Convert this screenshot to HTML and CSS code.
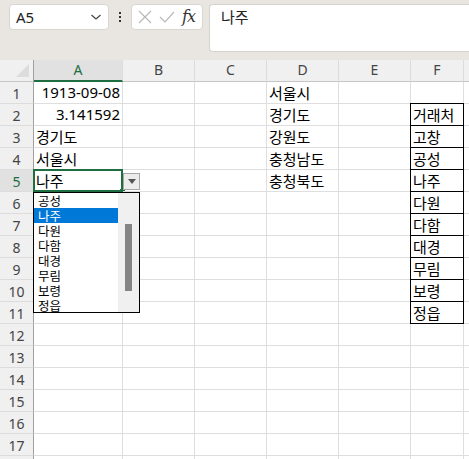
FILE: index.html
```html
<!DOCTYPE html>
<html lang="ko">
<head>
<meta charset="utf-8">
<link rel="stylesheet" href="styles.css">
</head>
<body>
<div class="topbar">
  <div class="namebox"><span>A5</span>
    <svg class="chev" width="12" height="8" viewBox="0 0 12 8"><path d="M1.5 2 L6 6 L10.5 2" fill="none" stroke="#444" stroke-width="1.2"/></svg>
  </div>
  <div class="dots"><i></i><i></i><i></i></div>
  <div class="fbtns">
    <svg width="14" height="14" viewBox="0 0 14 14"><path d="M1 1 L13 13 M13 1 L1 13" stroke="#b8b8b8" stroke-width="1.2" fill="none"/></svg>
    <svg width="16" height="12" viewBox="0 0 16 12"><path d="M1 6 L6 11 L15 1" stroke="#b8b8b8" stroke-width="1.2" fill="none"/></svg>
    <span class="fx">fx</span>
  </div>
  <div class="formula">나주</div>
</div>
<div class="sheet">
  <div class="corner"><span class="tri"></span></div>
  <div class="ch sel">A</div><div class="ch">B</div><div class="ch">C</div><div class="ch">D</div><div class="ch">E</div><div class="ch">F</div><div class="ch last"></div>

  <div class="rh">1</div><div class="c r">1913-09-08</div><div class="c"></div><div class="c"></div><div class="c">서울시</div><div class="c"></div><div class="c"></div><div class="c last"></div>
  <div class="rh">2</div><div class="c r">3.141592</div><div class="c"></div><div class="c"></div><div class="c">경기도</div><div class="c"></div><div class="c bx">거래처</div><div class="c last"></div>
  <div class="rh">3</div><div class="c">경기도</div><div class="c"></div><div class="c"></div><div class="c">강원도</div><div class="c"></div><div class="c bx">고창</div><div class="c last"></div>
  <div class="rh">4</div><div class="c">서울시</div><div class="c"></div><div class="c"></div><div class="c">충청남도</div><div class="c"></div><div class="c bx">공성</div><div class="c last"></div>
  <div class="rh sel">5</div><div class="c active">나주
    <span class="ddbtn"><svg width="8" height="5" viewBox="0 0 8 5"><path d="M0 0 H8 L4 5 Z" fill="#555"/></svg></span>
    <div class="ddlist">
      <ul>
        <li>공성</li><li class="on">나주</li><li>다원</li><li>다함</li><li>대경</li><li>무림</li><li>보령</li><li>정읍</li>
      </ul>
      <div class="sb"><div class="thumb"></div></div>
    </div>
  </div><div class="c"></div><div class="c"></div><div class="c">충청북도</div><div class="c"></div><div class="c bx">나주</div><div class="c last"></div>
  <div class="rh">6</div><div class="c"></div><div class="c"></div><div class="c"></div><div class="c"></div><div class="c"></div><div class="c bx">다원</div><div class="c last"></div>
  <div class="rh">7</div><div class="c"></div><div class="c"></div><div class="c"></div><div class="c"></div><div class="c"></div><div class="c bx">다함</div><div class="c last"></div>
  <div class="rh">8</div><div class="c"></div><div class="c"></div><div class="c"></div><div class="c"></div><div class="c"></div><div class="c bx">대경</div><div class="c last"></div>
  <div class="rh">9</div><div class="c"></div><div class="c"></div><div class="c"></div><div class="c"></div><div class="c"></div><div class="c bx">무림</div><div class="c last"></div>
  <div class="rh">10</div><div class="c"></div><div class="c"></div><div class="c"></div><div class="c"></div><div class="c"></div><div class="c bx">보령</div><div class="c last"></div>
  <div class="rh">11</div><div class="c"></div><div class="c"></div><div class="c"></div><div class="c"></div><div class="c"></div><div class="c bx">정읍</div><div class="c last"></div>
  <div class="rh">12</div><div class="c"></div><div class="c"></div><div class="c"></div><div class="c"></div><div class="c"></div><div class="c"></div><div class="c last"></div>
  <div class="rh">13</div><div class="c"></div><div class="c"></div><div class="c"></div><div class="c"></div><div class="c"></div><div class="c"></div><div class="c last"></div>
  <div class="rh">14</div><div class="c"></div><div class="c"></div><div class="c"></div><div class="c"></div><div class="c"></div><div class="c"></div><div class="c last"></div>
  <div class="rh">15</div><div class="c"></div><div class="c"></div><div class="c"></div><div class="c"></div><div class="c"></div><div class="c"></div><div class="c last"></div>
  <div class="rh">16</div><div class="c"></div><div class="c"></div><div class="c"></div><div class="c"></div><div class="c"></div><div class="c"></div><div class="c last"></div>
  <div class="rh">17</div><div class="c"></div><div class="c"></div><div class="c"></div><div class="c"></div><div class="c"></div><div class="c"></div><div class="c last"></div>
  <div class="rh"></div><div class="c"></div><div class="c"></div><div class="c"></div><div class="c"></div><div class="c"></div><div class="c"></div><div class="c last"></div>
</div>
</body>
</html>
```

FILE: styles.css
```css
* { box-sizing: border-box; }
html, body { margin: 0; padding: 0; }
body {
  width: 469px; height: 459px; overflow: hidden;
  background: #fff;
  font-family: "Noto Sans CJK KR", "Noto Sans", sans-serif;
  color: #000;
}
.topbar {
  height: 60px;
  background: #e9e6e2;
  display: flex;
  align-items: flex-start;
  padding: 4px 0 0 9px;
}
.namebox {
  width: 100px; height: 26px;
  background: #fff;
  border: 1px solid #d9d6d2;
  border-radius: 4px;
  display: flex; align-items: center; justify-content: space-between;
  padding: 0 6px 0 6px;
  font-family: "Noto Sans", sans-serif;
  font-size: 15px; color: #222;
}
.dots {
  width: 22px; height: 26px;
  display: flex; flex-direction: column; align-items: center; justify-content: center; gap: 2px;
}
.dots i { display: block; width: 2px; height: 2px; background: #333; }
.fbtns {
  width: 72px; height: 26px;
  background: #fff;
  border: 1px solid #d9d6d2;
  border-radius: 4px;
  display: flex; align-items: center; gap: 7px;
  padding: 0 0 0 6px;
}
.fx {
  font-family: "DejaVu Serif", "Liberation Serif", serif;
  font-style: italic;
  font-size: 16px; color: #333;
  line-height: 1;
  letter-spacing: -1px;
}
.formula {
  margin-left: 6px;
  flex: 1;
  height: 48px;
  background: #fff;
  border: 1px solid #d6d3cf;
  border-right: none;
  border-radius: 4px 0 0 4px;
  padding: 2px 0 0 11px;
  font-size: 15px; line-height: 20px; color: #222;
}
.sheet {
  display: grid;
  grid-template-columns: 34px 89px 72px 72px 72px 72px 53px 1fr;
  grid-template-rows: 22px;
  grid-auto-rows: 22px;
}
.corner {
  background: #f0f0f0;
  border-right: 1px solid #a0a0a0;
  border-bottom: 1px solid #c6c6c6;
  position: relative;
}
.tri {
  position: absolute; right: 4px; bottom: 4px;
  width: 0; height: 0;
  border-left: 13px solid transparent;
  border-bottom: 13px solid #dcdcdc;
}
.ch {
  background: #f0f0f0;
  border-right: 1px solid #dcdcdc;
  border-bottom: 1px solid #c6c6c6;
  font-family: "Noto Sans", sans-serif;
  font-size: 14px; color: #444;
  text-align: center; line-height: 20px;
}
.ch.sel {
  background: #e1e1e1;
  border-bottom: 2px solid #1e6e42;
  color: #1e6e42;
}
.ch.last { border-right: none; }
.rh {
  background: #f0f0f0;
  border-right: 1px solid #a0a0a0;
  border-bottom: 1px solid #dcdcdc;
  font-family: "Noto Sans", sans-serif;
  font-size: 14px; color: #444;
  text-align: center; line-height: 24px;
}
.rh.sel { background: #e1e1e1; color: #1e6e42; }
.c {
  border-right: 1px solid #dedede;
  border-bottom: 1px solid #dedede;
  font-size: 15px; line-height: 21px;
  padding: 0 3px 0 2px;
  white-space: nowrap;
  position: relative;
}
.c.r { text-align: right; font-family: "Noto Sans", sans-serif; padding-right: 2px; }
.c.last { border-right: none; }
.c.bx::before {
  content: "";
  position: absolute;
  left: -1px; top: -1px; right: -1px; bottom: -1px;
  border: 1px solid #000;
  pointer-events: none;
}
.c.active::before {
  content: "";
  position: absolute;
  left: -1px; top: -1px; right: -1px; bottom: -1px;
  border: 2px solid #1e6e42;
}
.c.active::after {
  content: "";
  position: absolute;
  right: -3px; bottom: -3px;
  width: 5px; height: 5px;
  background: #1e6e42;
}
.ddbtn {
  position: absolute;
  left: 89px; top: 3px;
  width: 17px; height: 17px;
  background: #ececec;
  border: 1px solid #a8a8a8;
  display: flex; align-items: center; justify-content: center;
  z-index: 3;
}
.ddlist {
  position: absolute;
  left: -1px; top: 22px;
  width: 107px; height: 121px;
  background: #fff;
  border: 1px solid #000;
  display: flex;
  z-index: 4;
}
.ddlist ul {
  list-style: none; margin: 0; padding: 0;
  width: 84px;
}
.ddlist li {
  height: 15px;
  font-size: 12.5px; line-height: 15px;
  padding-left: 4px;
  color: #000;
}
.ddlist li.on { background: #0078d7; color: #fff; }
.sb {
  flex: 1;
  background: #f0f0f0;
  position: relative;
}
.thumb {
  position: absolute;
  left: 7px; top: 31px;
  width: 7px; height: 67px;
  background: #858585;
}
```
